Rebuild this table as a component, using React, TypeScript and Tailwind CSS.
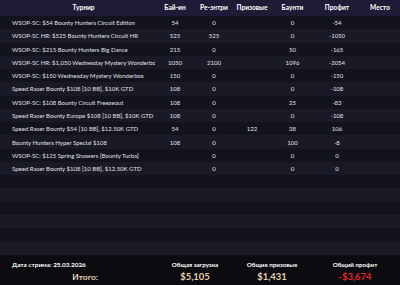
import React from 'react';

type Row = {
  name: string;
  buyin: string;
  reentry: string;
  prize: string;
  bounty: string;
  profit: string;
};

const rows: Row[] = [
  { name: 'WSOP-SC: $54 Bounty Hunters Circuit Edition', buyin: '54', reentry: '0', prize: '', bounty: '0', profit: '-54' },
  { name: 'WSOP-SC HR: $525 Bounty Hunters Circuit HR', buyin: '525', reentry: '525', prize: '', bounty: '0', profit: '-1050' },
  { name: 'WSOP-SC: $215 Bounty Hunters Big Dance', buyin: '215', reentry: '0', prize: '', bounty: '50', profit: '-165' },
  { name: 'WSOP-SC HR: $1,050 Wednesday Mystery Wonderbox I', buyin: '1050', reentry: '2100', prize: '', bounty: '1096', profit: '-2054' },
  { name: 'WSOP-SC: $150 Wednesday Mystery Wonderbox', buyin: '150', reentry: '0', prize: '', bounty: '0', profit: '-150' },
  { name: 'Speed Racer Bounty $108 [10 BB], $10K GTD', buyin: '108', reentry: '0', prize: '', bounty: '0', profit: '-108' },
  { name: 'WSOP-SC: $108 Bounty Circuit Freezeout', buyin: '108', reentry: '0', prize: '', bounty: '25', profit: '-83' },
  { name: 'Speed Racer Bounty Europe $108 [10 BB], $10K GTD', buyin: '108', reentry: '0', prize: '', bounty: '0', profit: '-108' },
  { name: 'Speed Racer Bounty $54 [10 BB], $12.50K GTD', buyin: '54', reentry: '0', prize: '122', bounty: '38', profit: '106' },
  { name: 'Bounty Hunters Hyper Special $108', buyin: '108', reentry: '0', prize: '', bounty: '100', profit: '-8' },
  { name: 'WSOP-SC: $125 Spring Showers [Bounty Turbo]', buyin: '', reentry: '0', prize: '', bounty: '0', profit: '0' },
  { name: 'Speed Racer Bounty $108 [10 BB], $12.50K GTD', buyin: '', reentry: '0', prize: '', bounty: '0', profit: '0' },
];

const emptyRows = 6;

export default function App() {
  const all = [...rows, ...Array.from({ length: emptyRows }, () => null)];

  return (
    <div
      className="flex h-[285px] w-[400px] flex-col overflow-hidden bg-[#0b0b10] text-[#e0e0e8]"
      style={{ fontFamily: 'Lato, "Noto Sans", sans-serif' }}
    >
      {/* Table header */}
      <div className="flex h-[16px] shrink-0 items-center bg-[#1f1b36] text-[6.6px] font-bold text-white">
        <div className="w-[155px] pl-3 text-center">Турнир</div>
        <div className="w-[40px] text-center">Бай-ин</div>
        <div className="w-[38px] whitespace-nowrap text-center">Ре-энтри</div>
        <div className="w-[38px] text-center">Призовые</div>
        <div className="w-[43px] text-center">Баунти</div>
        <div className="w-[46px] text-center">Профит</div>
        <div className="w-[40px] text-center">Место</div>
      </div>

      {/* Rows */}
      {all.map((r, i) => (
        <div
          key={i}
          className={`flex h-[13.28px] shrink-0 items-center text-[6px] ${
            i % 2 === 0 ? 'bg-[#13131d]' : 'bg-[#1a1a27]'
          }`}
        >
          <div className="w-[155px] overflow-hidden whitespace-nowrap pl-3 pr-1">{r?.name}</div>
          <div className="w-[40px] text-center">{r?.buyin}</div>
          <div className="w-[38px] text-center">{r?.reentry}</div>
          <div className="w-[38px] text-center">{r?.prize}</div>
          <div className="w-[43px] text-center">{r?.bounty}</div>
          <div className="w-[46px] text-center">{r?.profit}</div>
          <div className="w-[40px] text-center"></div>
        </div>
      ))}

      {/* Footer totals */}
      <div className="flex flex-1 items-start pt-[5px] font-bold">
        <div className="flex w-[100px] flex-col pl-3">
          <div className="whitespace-nowrap text-[6.4px] leading-[9px] text-white">Дата стрима: 25.03.2026</div>
          <div className="mt-[3px] pr-[2px] text-right text-[8.4px] leading-[10px] text-[#e6d3b0]">Итого:</div>
        </div>
        <div className="w-[56px]"></div>
        <div className="flex w-[78px] flex-col items-center">
          <div className="whitespace-nowrap text-[6.2px] leading-[9px] text-white">Общая загрузка</div>
          <div className="mt-[3px] text-[9.4px] leading-[10px] text-[#e6d3b0]">$5,105</div>
        </div>
        <div className="flex w-[76px] flex-col items-center">
          <div className="whitespace-nowrap text-[6.2px] leading-[9px] text-white">Общие призовые</div>
          <div className="mt-[3px] text-[9.4px] leading-[10px] text-[#e6d3b0]">$1,431</div>
        </div>
        <div className="flex w-[90px] flex-col items-center">
          <div className="whitespace-nowrap text-[6.2px] leading-[9px] text-white">Общий профит</div>
          <div className="mt-[3px] text-[9.4px] leading-[10px] text-[#e3262a]">-$3,674</div>
        </div>
      </div>
    </div>
  );
}
